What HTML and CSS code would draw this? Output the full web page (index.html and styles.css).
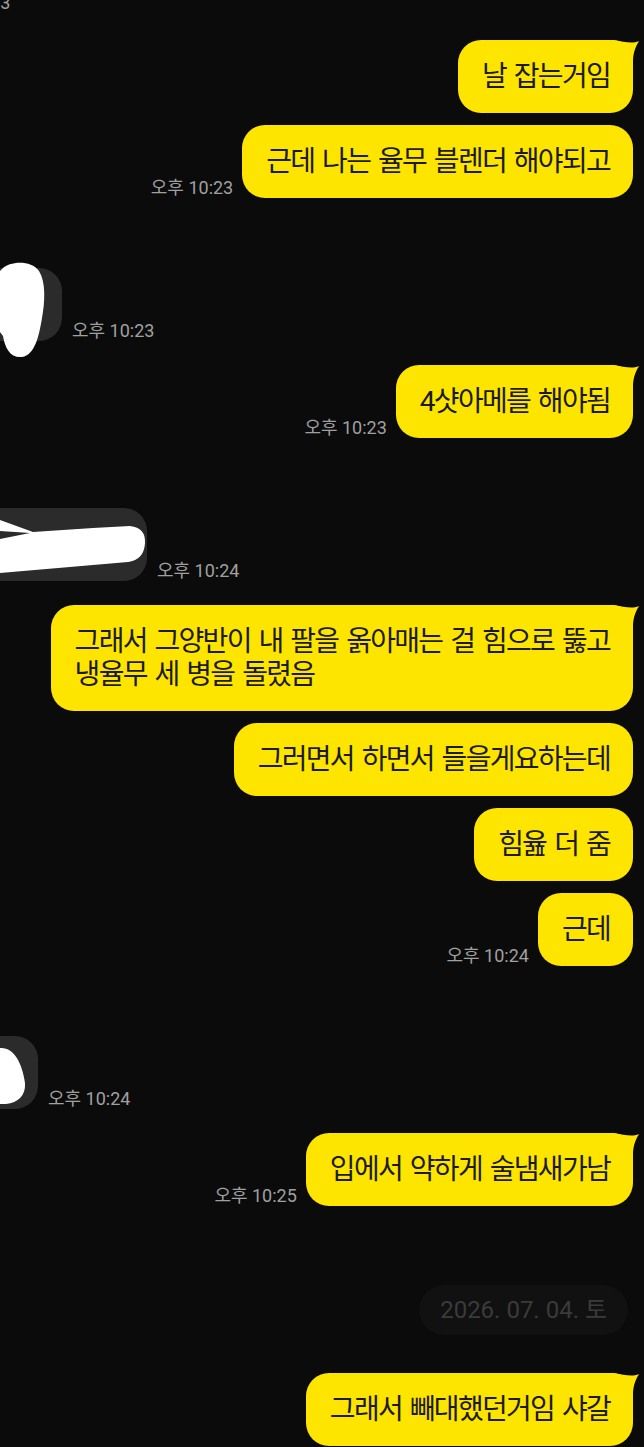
FILE: index.html
```html
<!DOCTYPE html>
<html lang="ko">
<head>
<meta charset="utf-8">
<title>채팅</title>
<link rel="stylesheet" href="styles.css">
</head>
<body>
<div class="chat">
  <div class="row you top"><span class="time">오후 10:23</span></div>

  <div class="row me first">
    <div class="bubble me tailed">날 잡는거임<svg class="tail" viewBox="0 0 27 22"><path d="M0,0 C12,2 19,4 26,1 C23,6 20,12 20,22 L0,22 Z"/></svg></div>
  </div>
  <div class="row me cont">
    <span class="time">오후 10:23</span>
    <div class="bubble me">근데 나는 율무 블렌더 해야되고</div>
  </div>

  <div class="row you turn">
    <div class="bubble you you-a"><svg class="scribble s-a" viewBox="0 0 46 98"><path d="M2,9 C10,1 31,0 39,11 C46,22 45,42 42,58 C39,76 35,95 22,97 C10,98 5,88 3,76 L0,72 L0,11 Z"/></svg></div>
    <span class="time">오후 10:23</span>
  </div>

  <div class="row me reply">
    <span class="time">오후 10:23</span>
    <div class="bubble me tailed">4샷아메를 해야됨<svg class="tail" viewBox="0 0 27 22"><path d="M0,0 C12,2 19,4 26,1 C23,6 20,12 20,22 L0,22 Z"/></svg></div>
  </div>

  <div class="row you turn">
    <div class="bubble you you-b"><svg class="scribble s-b" viewBox="0 0 146 56"><path d="M0,2 L33,14 L93,10 L130,8 Q146,10 145,25 Q144,42 128,44 L0,55 Z"/><path class="gap" d="M0,13 L30,15 L0,21 Z"/></svg></div>
    <span class="time">오후 10:24</span>
  </div>

  <div class="row me reply">
    <div class="bubble me tailed"><span class="line">그래서 그양반이 내 팔을 옭아매는 걸 힘으로 뚫고</span><span class="line">냉율무 세 병을 돌렸음</span><svg class="tail" viewBox="0 0 27 22"><path d="M0,0 C12,2 19,4 26,1 C23,6 20,12 20,22 L0,22 Z"/></svg></div>
  </div>
  <div class="row me cont">
    <div class="bubble me">그러면서 하면서 들을게요하는데</div>
  </div>
  <div class="row me cont">
    <div class="bubble me">힘윮 더 줌</div>
  </div>
  <div class="row me cont">
    <span class="time">오후 10:24</span>
    <div class="bubble me">근데</div>
  </div>

  <div class="row you turn">
    <div class="bubble you you-c"><svg class="scribble s-c" viewBox="0 0 26 60"><path d="M0,3 C14,2 22,18 25,38 C26,50 18,58 6,59 L0,59 Z"/></svg></div>
    <span class="time">오후 10:24</span>
  </div>

  <div class="row me reply">
    <span class="time">오후 10:25</span>
    <div class="bubble me tailed">입에서 약하게 술냄새가남<svg class="tail" viewBox="0 0 27 22"><path d="M0,0 C12,2 19,4 26,1 C23,6 20,12 20,22 L0,22 Z"/></svg></div>
  </div>

  <div class="date-row"><span class="date">2026. 07. 04. 토</span></div>

  <div class="row me after-date">
    <div class="bubble me tailed">그래서 빼대했던거임 샤갈<svg class="tail" viewBox="0 0 27 22"><path d="M0,0 C12,2 19,4 26,1 C23,6 20,12 20,22 L0,22 Z"/></svg></div>
  </div>
</div>
</body>
</html>
```

FILE: styles.css
```css
* { box-sizing: border-box; }
html, body { margin: 0; padding: 0; }
body {
  background: #0b0b0b;
  width: 644px;
  height: 1447px;
  overflow: hidden;
  font-family: Roboto, "Noto Sans CJK KR", "Noto Sans", sans-serif;
}
.chat { display: flex; flex-direction: column; }

.row { display: flex; align-items: flex-end; }
.row.me { justify-content: flex-end; padding-right: 11px; gap: 9px; }
.row.you { gap: 10px; }

.top { margin-top: -7px; height: 20px; }
.top .time { margin-left: -72px; }
.first { margin-top: 27px; }
.cont { margin-top: 12px; }
.turn { margin-top: 70px; }
.reply { margin-top: 24px; }
.after-date { margin-top: 38px; }

.time {
  font-size: 18px;
  line-height: 20px;
  color: #a0a0a0;
  white-space: nowrap;
  flex: none;
}

.bubble {
  position: relative;
  font-size: 28px;
  line-height: 33px;
  letter-spacing: -1.7px;
  word-spacing: 2.5px;
  padding: 20px 23px 20px 24px;
  border-radius: 23px;
  white-space: nowrap;
}
.bubble .line { display: block; height: 33px; }
.bubble.me { background: #fee500; color: #1b1b1b; }
.bubble.tailed { border-top-right-radius: 20px; }
.tail {
  position: absolute;
  top: 0;
  right: -7px;
  width: 27px;
  height: 22px;
  fill: #fee500;
}

.bubble.you { background: #2b2b2b; height: 73px; flex: none; }
.you-a { width: 122px; margin-left: -60px; }
.you-b { width: 200px; margin-left: -53px; }
.you-c { width: 100px; margin-left: -62px; }

.scribble { position: absolute; fill: #ffffff; }
.scribble .gap { fill: #2b2b2b; }
.s-a { left: 60px; top: -8px; width: 46px; height: 98px; }
.s-b { left: 53px; top: 10px; width: 146px; height: 56px; }
.s-c { left: 62px; top: 9px; width: 26px; height: 60px; }

.date-row {
  display: flex;
  justify-content: flex-end;
  padding-right: 16px;
  margin-top: 79px;
}
.date {
  background: #111111;
  color: #3b3b3b;
  font-size: 24px;
  height: 50px;
  line-height: 50px;
  padding: 0 21px;
  border-radius: 25px;
  white-space: nowrap;
}
```
